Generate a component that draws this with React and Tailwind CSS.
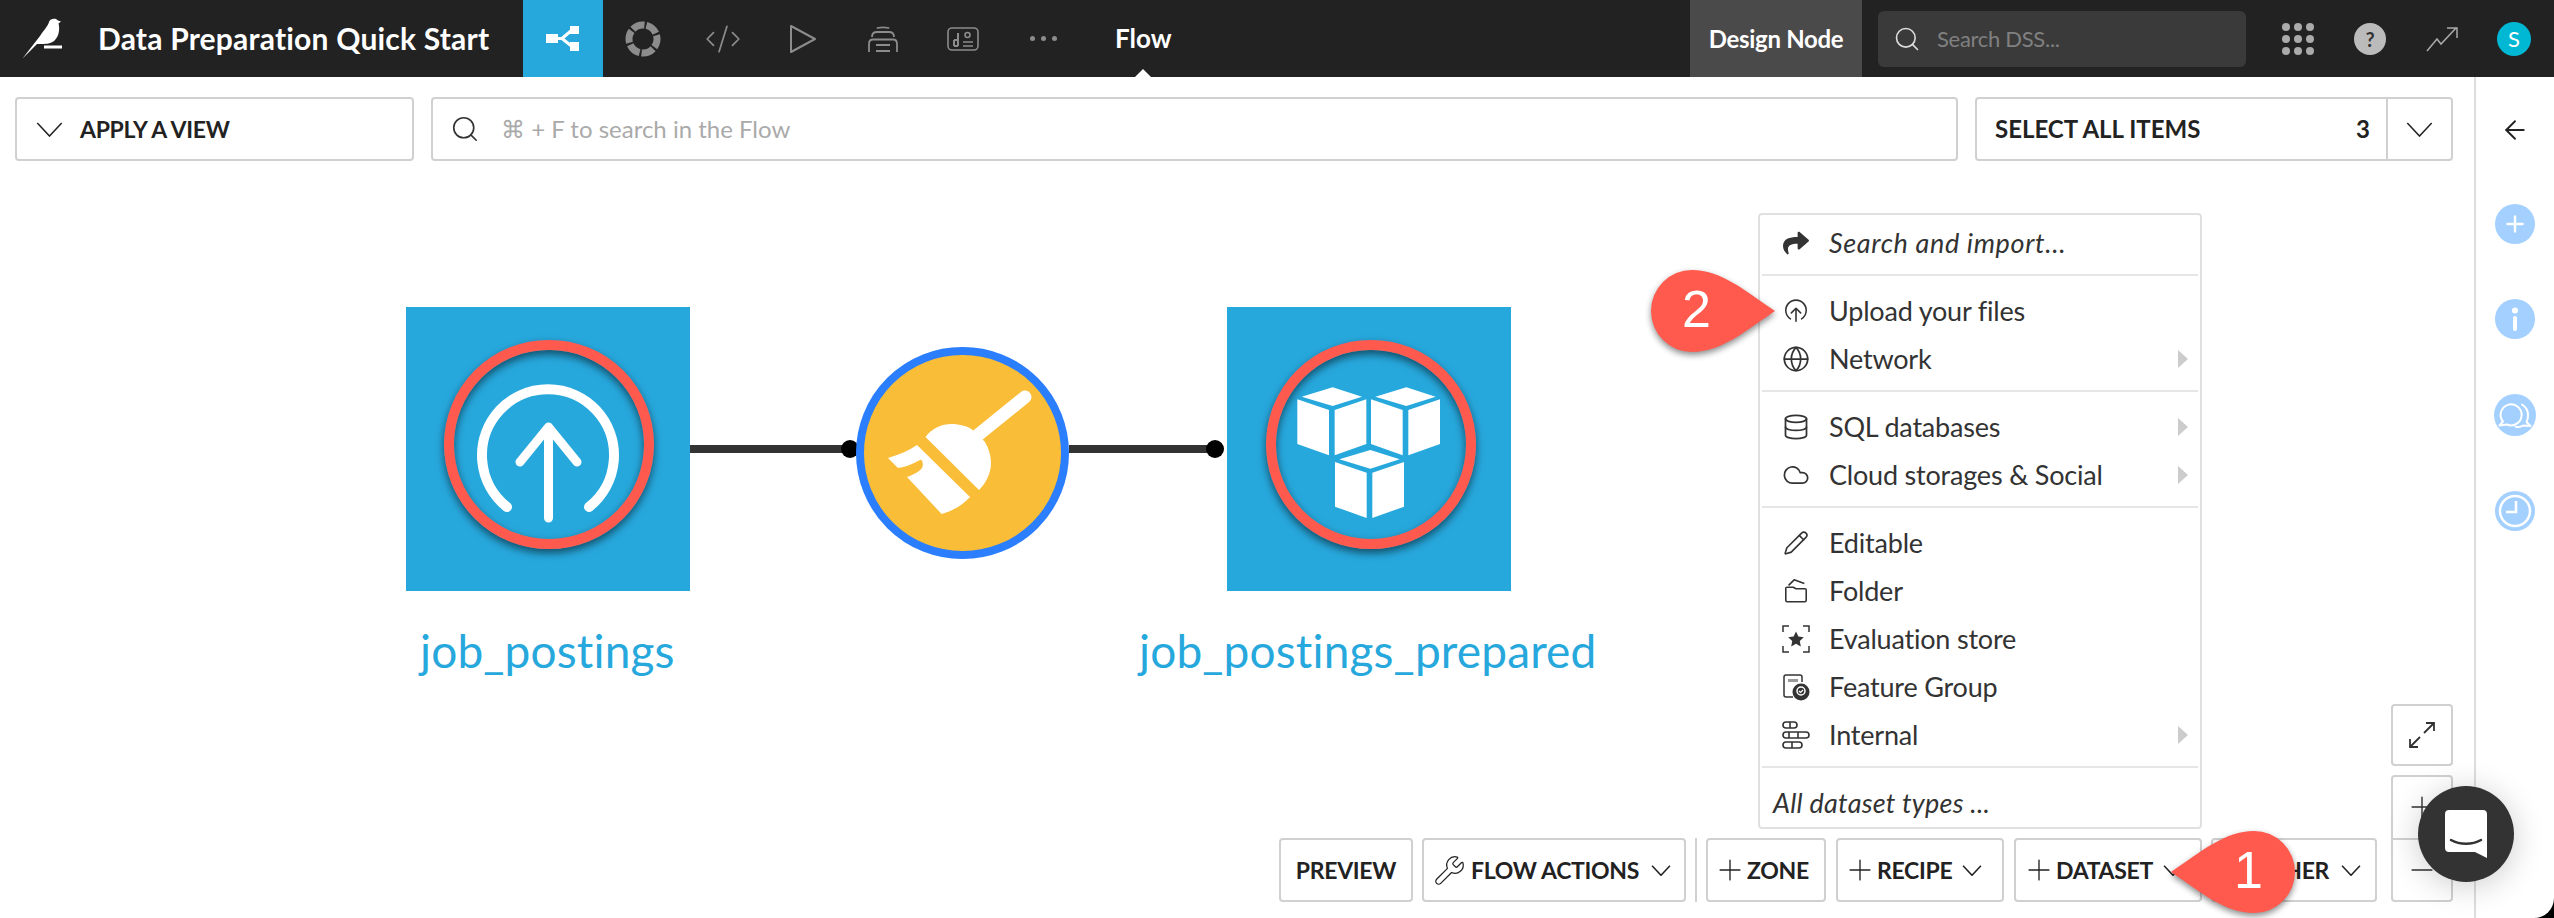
import { CodeXml, Search, Wrench, Plus, Minus, Globe, Database, Cloud, Pencil, ArrowLeft } from "lucide-react";
import { FaShare } from "react-icons/fa";

function Chevron({ className, sw = 1.6 }) {
  return (
    <svg viewBox="0 0 28 16" className={className} fill="none" stroke="currentColor" strokeWidth={sw}>
      <path d="M1 1l13 14L27 1" />
    </svg>
  );
}

function Caret() {
  return (
    <svg viewBox="0 0 10 18" className="w-[10px] h-[18px] ml-auto mr-[12px]" fill="#cccccc">
      <path d="M0 0l10 9-10 9z" />
    </svg>
  );
}

function FlowIcon() {
  return (
    <svg viewBox="0 0 34 26" className="w-[34px] h-[26px]" fill="white" stroke="white">
      <rect x="0" y="8" width="12" height="9" stroke="none" />
      <rect x="24" y="0" width="9" height="8" stroke="none" />
      <rect x="24" y="16" width="9" height="9" stroke="none" />
      <path d="M10 12.5h7M16 12.5L26 4M16 12.5L26 20.5" strokeWidth="3" fill="none" />
    </svg>
  );
}

function RingIcon() {
  return (
    <svg viewBox="0 0 36 36" className="w-[36px] h-[36px]" fill="none" stroke="#8c8c8c" strokeWidth="7">
      <circle cx="18" cy="18" r="14" pathLength="60" strokeDasharray="8.6 1.4" transform="rotate(-76 18 18)" />
    </svg>
  );
}

function PlayIcon() {
  return (
    <svg viewBox="0 0 28 30" className="w-[28px] h-[30px]" fill="none" stroke="#8c8c8c" strokeWidth="2" strokeLinejoin="round">
      <path d="M2 2l24 13L2 28z" />
    </svg>
  );
}

function StackIcon() {
  return (
    <svg viewBox="0 0 30 28" className="w-[30px] h-[28px]" fill="none" stroke="#8c8c8c" strokeWidth="1.8">
      <path d="M9 3.5c1-1.5 11-1.500 12 0" />
      <path d="M4 12c0-4 2-5 5-5h12c3 0 5 1 5 5" />
      <path d="M1 27v-8c0-3 2-4.500 4-4.500h20c2 0 4 1.500 4 4.500v8" />
      <path d="M8 20h14M8 26h14" />
    </svg>
  );
}

function DashIcon() {
  return (
    <svg viewBox="0 0 32 24" className="w-[32px] h-[24px]" fill="none" stroke="#8c8c8c" strokeWidth="1.6">
      <rect x="1" y="1" width="30" height="22" rx="4" />
      <path d="M7 19v-6M11 19V6M7 19h4M7 13h4" strokeWidth="2" />
      <circle cx="20.500" cy="8" r="2.500" />
      <path d="M16 15h10M16 19h10" />
    </svg>
  );
}

function BirdLogo() {
  return (
    <svg viewBox="0 0 70 77" className="w-[70px] h-[77px]" fill="white">
      <path d="M22.500 58.500L40 36c4-6 8-10 9-14 1-3 4-3.500 7-3l2 1.500 3 1-2.500 2c1.500 5.500.5 12.500-3.500 16.500-3 3.500-8 4-13 4h-5z" />
      <rect x="44" y="45.500" width="18" height="3" />
    </svg>
  );
}

function GridIcon() {
  return (
    <div className="grid grid-cols-3 gap-x-[4px] gap-y-[4px]">
      {[0, 1, 2, 3, 4, 5, 6, 7, 8].map((i) => (
        <span key={i} className="w-[8px] h-[8px] rounded-full bg-[#aaaaaa]" />
      ))}
    </div>
  );
}

function TrendIcon() {
  return (
    <svg viewBox="0 0 32 26" className="w-[32px] h-[26px]" fill="none" stroke="#aaaaaa" strokeWidth="1.5">
      <path d="M1 25l10-12 4 5L30 2M21 2h10v10" />
    </svg>
  );
}

function DatasetNode({ left, label, labelLeft, ringLeft, children }) {
  return (
    <>
      <div className={`absolute top-[230px] w-[284px] h-[284px] bg-[#27a8dd] ${left}`}>
        <div className={`absolute top-[33px] w-[210px] h-[209px] rounded-full border-[10px] border-[#ff5a4d] shadow-[0_4px_8px_rgba(0,0,0,0.55),inset_0_4px_8px_rgba(0,0,0,0.55)] ${ringLeft}`} />
        {children}
      </div>
      <div className={`absolute top-[548px] text-[46px] leading-[52px] tracking-[0.15px] text-[#27a8dd] whitespace-nowrap ${labelLeft}`}>{label}</div>
    </>
  );
}

function UploadGlyph() {
  return (
    <svg viewBox="406 307 284 284" className="absolute inset-0 w-[284px] h-[284px]" fill="none" stroke="white" strokeWidth="10" strokeLinecap="round" strokeLinejoin="round">
      <path d="M507 507A66 66 0 1 1 589 507" />
      <path d="M548.500 518V430M520 462l28.500-35 28.500 35" strokeWidth="9" />
    </svg>
  );
}

function Cube({ x, y }) {
  return (
    <g transform={`translate(${x} ${y})`} fill="white">
      <polygon points="305,290 398,262 486,290 398,318" />
      <polygon points="292,298 387,330 387,466 292,432" />
      <polygon points="404,330 499,298 499,432 404,466" />
    </g>
  );
}

function CubesGlyph() {
  return (
    <svg viewBox="81 21 852 852" className="absolute inset-0 w-[284px] h-[284px]">
      <Cube x={0} y={0} />
      <Cube x={221} y={0} />
      <Cube x={113} y={188} />
    </svg>
  );
}

function BroomGlyph() {
  return (
    <svg viewBox="856 347 213 212" className="absolute left-[-8px] top-[-8px] w-[213px] h-[212px]" fill="white">
      <path d="M1025 397L978 435" stroke="white" strokeWidth="13" strokeLinecap="round" />
      <path d="M925.500 437C932 428 942 424 951 424 960 424 968 426 974 431L985 442C989 449 991 456 991 463 991 473 986 483 979 490z" />
      <path d="M917 445L970 497C962 506 952 511 941.600 514L907 477C913 475 920 471 922 468 924 464 922 459 920 460 913 464 905 467 898 468L888 458C898 455 908 451 917 445z" />
    </svg>
  );
}

function Link({ left, width }) {
  return <div className={`absolute top-[368px] h-[8px] bg-[#333333] ${left} ${width}`} />;
}

function UploadSmall() {
  return (
    <svg viewBox="0 0 28 28" className="w-[26px] h-[26px]" fill="none" stroke="#333333" strokeWidth="1.700" strokeLinecap="round" strokeLinejoin="round">
      <path d="M8 22.500A11 11 0 1 1 20 22.500" />
      <path d="M14 25V11M9 16l5-5 5 5" />
    </svg>
  );
}

function OpenFolder() {
  return (
    <svg viewBox="0 0 28 28" className="w-[26px] h-[26px]" fill="none" stroke="#333333" strokeWidth="1.700" strokeLinejoin="round">
      <path d="M3 10V24c0 1 .5 1.500 1.500 1.500h19c1 0 1.500-.5 1.500-1.500V13c0-1-.5-1.500-1.500-1.500H14L11 10H3.500" />
      <path d="M6 8l6-6 11 4" />
    </svg>
  );
}

function EvalStore() {
  return (
    <svg viewBox="0 0 28 28" className="w-[28px] h-[28px]" fill="none" stroke="#333333" strokeWidth="1.500">
      <path d="M1 7V1h6M21 1h6v6M27 21v6h-6M7 27H1v-6" />
      <path d="M14 6.500l2.400 5 5.400.7-4 3.800 1 5.400-4.800-2.600-4.800 2.600 1-5.400-4-3.800 5.400-.7z" fill="#333333" stroke="none" />
    </svg>
  );
}

function FeatureGroup() {
  return (
    <svg viewBox="0 0 28 28" className="w-[28px] h-[28px]" fill="none" stroke="#333333" strokeWidth="1.500">
      <path d="M11 24H4c-1.500 0-2-.5-2-2V4c0-1.500.5-2 2-2h14c1.500 0 2 .5 2 2v5" />
      <rect x="6" y="6" width="10" height="3" fill="#999999" stroke="none" />
      <circle cx="19" cy="19" r="8.500" fill="#333333" stroke="none" />
      <circle cx="19" cy="18" r="4" fill="none" stroke="white" />
      <path d="M17 18l1.500 1.500 2.500-2.500" stroke="white" strokeWidth="1.200" />
    </svg>
  );
}

function InternalIcon() {
  return (
    <svg viewBox="0 0 28 28" className="w-[28px] h-[28px]" fill="none" stroke="#333333" strokeWidth="1.600">
      <rect x="1" y="1" width="14" height="6" rx="3" />
      <path d="M8 1v6" />
      <rect x="1" y="11" width="26" height="6" rx="3" />
      <path d="M7 11v6M16 11v6" />
      <rect x="1" y="21" width="19" height="6" rx="3" />
      <path d="M10 21v6" />
    </svg>
  );
}

function MenuRow({ icon, label, italic, sub }) {
  return (
    <div className="h-[48px] flex items-center text-[#333333]">
      <div className="w-[28px] ml-[22px] mr-[19px] flex justify-center">{icon}</div>
      <span className={italic ? "italic tracking-[0.65px]" : ""}>{label}</span>
      {sub && <Caret />}
    </div>
  );
}

function Divider() {
  return <div className="h-[2px] mx-[2px] mt-[7px] mb-[11px] bg-[#e6e6e6]" />;
}

function DatasetMenu() {
  return (
    <div className="absolute left-[1758px] top-[136px] w-[444px] pt-[4px] bg-white border-2 border-[#e0e0e0] rounded-[4px] text-[27px] tracking-[-0.2px] z-10">
      <MenuRow icon={<FaShare className="w-[26px] h-[26px] text-[#333333]" />} label="Search and import..." italic />
      <Divider />
      <MenuRow icon={<UploadSmall />} label="Upload your files" />
      <MenuRow icon={<Globe className="w-[28px] h-[28px]" strokeWidth={1.500} />} label="Network" sub />
      <Divider />
      <MenuRow icon={<Database className="w-[28px] h-[28px]" strokeWidth={1.500} />} label="SQL databases" sub />
      <MenuRow icon={<Cloud className="w-[28px] h-[28px]" strokeWidth={1.500} />} label="Cloud storages & Social" sub />
      <Divider />
      <MenuRow icon={<Pencil className="w-[26px] h-[26px]" strokeWidth={1.500} />} label="Editable" />
      <MenuRow icon={<OpenFolder />} label="Folder" />
      <MenuRow icon={<EvalStore />} label="Evaluation store" />
      <MenuRow icon={<FeatureGroup />} label="Feature Group" />
      <MenuRow icon={<InternalIcon />} label="Internal" sub />
      <Divider />
      <div className="h-[48px] pl-[13px] flex items-center italic tracking-[0.25px] text-[#333333]">All dataset types ...</div>
    </div>
  );
}

function ToolButton({ className, children }) {
  return (
    <div className={`h-[64px] flex items-center bg-white border-2 border-[#d0d0d0] rounded-[4px] font-bold text-[23px] text-[#222222] tracking-[-0.3px] ${className}`}>
      {children}
    </div>
  );
}

function AddLabel({ label }) {
  return (
    <>
      <Plus className="w-[34px] h-[34px]" strokeWidth={0.95} />
      {label}
    </>
  );
}

function SideCircle({ children, size = "w-[40px] h-[40px]" }) {
  return <div className={`${size} rounded-full bg-[#a3d0ff] flex items-center justify-center`}>{children}</div>;
}

function Teardrop({ className, flip, number, numberClass }) {
  return (
    <div className={`absolute w-[126px] h-[84px] z-20 ${className}`}>
      <svg viewBox="0 0 126 84" className={`w-[126px] h-[84px] overflow-visible drop-shadow-[0_3px_3px_rgba(0,0,0,0.45)] ${flip ? "-scale-x-100" : ""}`} fill="#ff5a4d">
        <path d="M124 42C93 63 70 83 41 83A41 41 0 0 1 41 1C70 1 93 21 124 42Z" />
      </svg>
      <span className={`absolute top-[10px] text-[52px] leading-[60px] text-white [font-family:'Liberation_Sans',sans-serif] ${numberClass}`}>{number}</span>
    </div>
  );
}

export default function App() {
  return (
    <div className="relative w-[2554px] h-[918px] bg-black overflow-hidden [font-family:Lato,sans-serif]">
      <div className="w-full h-full flex flex-col bg-white rounded-br-[20px] overflow-hidden">
        {/* top nav */}
        <header className="relative h-[77px] flex items-center bg-[#222222] text-white">
          <div className="w-[523px] h-full flex items-center">
            <div className="w-[98px]"><BirdLogo /></div>
            <span className="text-[30px] font-bold tracking-[0.2px] whitespace-nowrap">Data Preparation Quick Start</span>
          </div>
          <div className="w-[80px] h-full flex items-center justify-center bg-[#27a8dd]"><FlowIcon /></div>
          <div className="w-[80px] h-full flex items-center justify-center"><RingIcon /></div>
          <div className="w-[80px] h-full flex items-center justify-center"><CodeXml className="w-[38px] h-[38px] text-[#8c8c8c]" strokeWidth={1.1} /></div>
          <div className="w-[80px] h-full flex items-center justify-center"><PlayIcon /></div>
          <div className="w-[80px] h-full flex items-center justify-center"><StackIcon /></div>
          <div className="w-[80px] h-full flex items-center justify-center"><DashIcon /></div>
          <div className="w-[80px] h-full flex items-center justify-center gap-[6px]">
            <span className="w-[5px] h-[5px] rounded-full bg-[#8c8c8c]" />
            <span className="w-[5px] h-[5px] rounded-full bg-[#8c8c8c]" />
            <span className="w-[5px] h-[5px] rounded-full bg-[#8c8c8c]" />
          </div>
          <div className="relative h-full flex items-center ml-[32px] text-[26px] font-bold">
            Flow
            <div className="absolute left-[20px] bottom-0 w-0 h-0 border-x-[8px] border-x-transparent border-b-[8px] border-b-white" />
          </div>
          <div className="ml-auto h-full flex items-center pr-[4px]">
            <div className="w-[172px] h-full flex items-center justify-center bg-[#4a4a4a] text-[24px] font-bold tracking-[-0.3px]">Design Node</div>
            <div className="w-[368px] h-[56px] ml-[16px] flex items-center bg-[#3a3a3a] rounded-[6px] pl-[15px]">
              <Search className="w-[28px] h-[28px] text-[#dddddd]" strokeWidth={1.400} />
              <span className="ml-[16px] text-[22px] tracking-[-0.3px] text-[#808080]">Search DSS...</span>
            </div>
            <div className="w-[72px] ml-[16px] flex justify-center"><GridIcon /></div>
            <div className="w-[72px] flex justify-center">
              <div className="w-[32px] h-[32px] rounded-full bg-[#bbbbbb] flex items-center justify-center text-[20px] font-bold text-[#333333]">?</div>
            </div>
            <div className="w-[72px] flex justify-center"><TrendIcon /></div>
            <div className="w-[72px] flex justify-center">
              <div className="w-[34px] h-[34px] rounded-full bg-[#00b8d4] flex items-center justify-center text-[22px] text-white">S</div>
            </div>
          </div>
        </header>

        <div className="flex flex-1">
          <main className="relative flex-1">
            {/* filter bar */}
            <div className="flex gap-[17px] pl-[15px] pr-[21px] pt-[20px]">
              <div className="w-[399px] h-[64px] flex items-center pl-[19px] border-2 border-[#d0d0d0] rounded-[4px] font-bold text-[23px] text-[#222222] tracking-[-0.3px]">
                <Chevron className="w-[27px] h-[15px] text-[#222222] mr-[17px]" />
                APPLY A VIEW
              </div>
              <div className="flex-1 h-[64px] flex items-center pl-[17px] border-2 border-[#d0d0d0] rounded-[4px]">
                <Search className="w-[30px] h-[30px] text-[#333333]" strokeWidth={1.300} />
                <span className="ml-[21px] text-[24px] text-[#aaaaaa]">⌘ + F to search in the Flow</span>
              </div>
              <div className="w-[478px] h-[64px] flex items-center border-2 border-[#d0d0d0] rounded-[4px] font-bold text-[24px] text-[#222222]">
                <span className="ml-[18px]">SELECT ALL ITEMS</span>
                <span className="ml-auto mr-[16px]">3</span>
                <div className="w-[65px] h-full flex items-center justify-center border-l-2 border-[#d0d0d0]">
                  <Chevron className="w-[27px] h-[15px]" />
                </div>
              </div>
            </div>

            {/* flow graph */}
            <Link left="left-[690px]" width="w-[160px]" />
            <div className="absolute left-[841px] top-[363px] w-[18px] h-[18px] rounded-full bg-black" />
            <Link left="left-[1069px]" width="w-[146px]" />
            <div className="absolute left-[1206px] top-[363px] w-[18px] h-[18px] rounded-full bg-black" />

            <DatasetNode left="left-[406px]" ringLeft="left-[38px]" labelLeft="left-[420px]" label="job_postings">
              <UploadGlyph />
            </DatasetNode>
            <div className="absolute left-[856px] top-[270px] w-[213px] h-[212px] rounded-full bg-[#f9bd38] border-[8px] border-[#2b7fff]">
              <BroomGlyph />
            </div>
            <DatasetNode left="left-[1227px]" ringLeft="left-[39px]" labelLeft="left-[1139px]" label="job_postings_prepared">
              <CubesGlyph />
            </DatasetNode>

            <DatasetMenu />

            {/* bottom actions */}
            <div className="absolute right-[21px] bottom-[16px] flex items-end gap-[9px]">
              <ToolButton className="w-[134px] justify-center">PREVIEW</ToolButton>
              <ToolButton className="w-[264px] pl-[9px]">
                <Wrench className="w-[33px] h-[33px] mr-[5px]" strokeWidth={0.9} />
                FLOW ACTIONS
                <Chevron className="w-[20px] h-[11px] ml-[12px]" sw={2.2} />
              </ToolButton>
              <div className="w-[2px] h-[64px] bg-[#d0d0d0]" />
              <ToolButton className="w-[120px] pl-[5px]">
                <AddLabel label="ZONE" />
              </ToolButton>
              <ToolButton className="w-[168px] ml-[1px] pl-[5px]">
                <AddLabel label="RECIPE" />
                <Chevron className="w-[20px] h-[11px] ml-[10px]" sw={2.2} />
              </ToolButton>
              <ToolButton className="w-[188px] ml-[1px] pl-[6px]">
                <AddLabel label="DATASET" />
                <Chevron className="w-[20px] h-[11px] ml-[10px]" sw={2.2} />
              </ToolButton>
              <ToolButton className="w-[166px] pl-[6px] mr-[5px]">
                <AddLabel label="OTHER" />
                <Chevron className="w-[20px] h-[11px] ml-[12px]" sw={2.2} />
              </ToolButton>
              <div className="flex flex-col gap-[9px]">
                <div className="w-[62px] h-[62px] flex items-center justify-center border-2 border-[#d0d0d0] rounded-[4px]">
                  <svg viewBox="0 0 26 26" className="w-[26px] h-[26px]" fill="none" stroke="#333333" strokeWidth="1.800">
                    <path d="M15 11L25 1M17 1h8v8M11 15L1 25M9 25H1v-8" />
                  </svg>
                </div>
                <div className="w-[62px] h-[127px] flex flex-col border-2 border-[#d0d0d0] rounded-[4px] text-[#333333]">
                  <div className="flex-1 flex items-center justify-center border-b-2 border-[#d0d0d0]"><Plus className="w-[34px] h-[34px]" strokeWidth={1} /></div>
                  <div className="flex-1 flex items-center justify-center"><Minus className="w-[34px] h-[34px]" strokeWidth={1} /></div>
                </div>
              </div>
            </div>
          </main>

          {/* right rail */}
          <aside className="w-[80px] pt-[38px] flex flex-col items-center border-l-2 border-[#dddddd]">
            <ArrowLeft className="w-[30px] h-[30px] text-[#222222]" strokeWidth={1.500} />
            <div className="mt-[59px] flex flex-col items-center gap-[55px]">
              <SideCircle><Plus className="w-[26px] h-[26px] text-white" strokeWidth={2.200} /></SideCircle>
              <SideCircle>
                <svg viewBox="0 0 8 24" className="w-[8px] h-[24px]" fill="white">
                  <circle cx="4" cy="3.500" r="3" />
                  <rect x="2" y="9" width="4" height="15" rx="2" />
                </svg>
              </SideCircle>
              <SideCircle size="w-[42px] h-[42px]">
                <svg viewBox="0 0 34 28" className="w-[34px] h-[28px]" fill="none" stroke="white" strokeWidth="2" strokeLinejoin="round" strokeLinecap="round">
                  <path d="M5 20.500A10.500 10.500 0 1 1 9 23.500L1.500 24.500z" />
                  <path d="M24 3.500C28 6 30 9.500 30 14c0 2.500-.5 5-1.500 7l4 4-7.500-.5c-2 1.500-5 2-7.500 1" />
                </svg>
              </SideCircle>
              <SideCircle>
                <svg viewBox="0 0 34 34" className="w-[34px] h-[34px]" fill="none" stroke="white" strokeWidth="2.500">
                  <circle cx="17" cy="17" r="15" />
                  <path d="M18 7v11H8" />
                </svg>
              </SideCircle>
            </div>
          </aside>
        </div>
      </div>

      {/* overlays: annotation drops and chat bubble */}
      <Teardrop className="left-[1651px] top-[269px]" number="2" numberClass="left-[31px]" />
      <Teardrop className="left-[2169px] top-[830px]" flip number="1" numberClass="left-[65px]" />

      <div className="absolute left-[2418px] top-[786px] w-[96px] h-[96px] rounded-full bg-[#333333] flex items-center justify-center shadow-[0_4px_32px_rgba(0,0,0,0.2)] z-20">
        <svg viewBox="0 0 42 48" className="w-[42px] h-[48px]">
          <path d="M4 0h34c2.500 0 4 1.500 4 4v44l-12-6H4c-2.500 0-4-1.500-4-4V4c0-2.500 1.500-4 4-4z" fill="white" />
          <path d="M6 30c9 5 21 5 30 0" fill="none" stroke="#333333" strokeWidth="2.500" strokeLinecap="round" />
        </svg>
      </div>
    </div>
  );
}
